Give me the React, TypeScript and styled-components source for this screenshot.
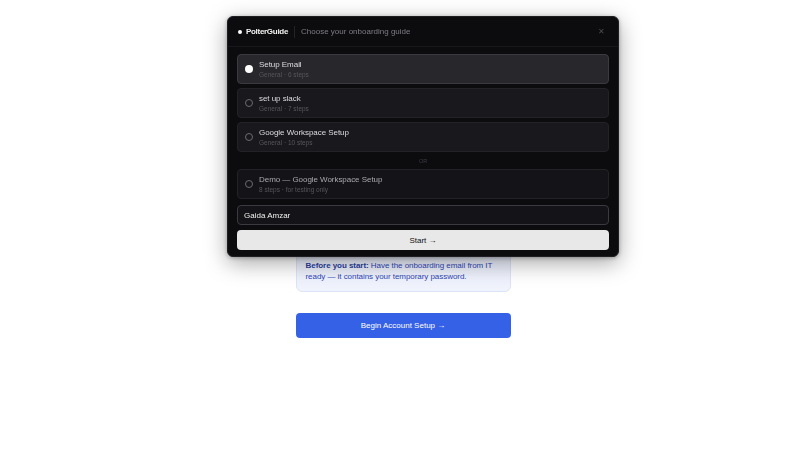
import React, { useState } from "react";
import styled, { createGlobalStyle } from "styled-components";

const GlobalStyle = createGlobalStyle`
  html, body {
    margin: 0;
    padding: 0;
    background: #ffffff;
    font-family: "Liberation Sans", Arial, sans-serif;
  }
`;

const Page = styled.div`
  width: 806px;
  height: 454px;
  display: flex;
  flex-direction: column;
  align-items: center;
  padding-top: 242px;
  box-sizing: border-box;
`;

const Column = styled.div`
  width: 215px;
  display: flex;
  flex-direction: column;
  gap: 21px;
`;

const InfoBox = styled.div`
  background: linear-gradient(180deg, #e8edfb 0%, #f1f4fd 100%);
  border: 1px solid #dde4f7;
  border-radius: 6px;
  padding: 17px 9px 9px;
  font-size: 8px;
  line-height: 11px;
  color: #2f47b8;
  letter-spacing: -0.05px;

  b {
    color: #2a3f9f;
  }
`;

const BeginButton = styled.button`
  height: 25px;
  border: none;
  border-radius: 4px;
  background: #3461e6;
  color: #ffffff;
  font-family: inherit;
  font-size: 8px;
  font-weight: 400;
`;

const Modal = styled.div`
  position: fixed;
  top: 16px;
  left: 227px;
  width: 392px;
  background: #0c0c0f;
  border: 1px solid #1e1e23;
  border-radius: 6px;
  box-sizing: border-box;
  box-shadow: 0 6px 22px rgba(0, 0, 0, 0.35), 0 1px 4px rgba(0, 0, 0, 0.3);
  overflow: hidden;
`;

const Header = styled.div`
  height: 29px;
  display: flex;
  align-items: center;
  padding: 0 10px;
  border-bottom: 1px solid #18181c;
`;

const Dot = styled.span`
  width: 4px;
  height: 4px;
  border-radius: 50%;
  background: #ffffff;
  margin-right: 4px;
`;

const Brand = styled.span`
  font-size: 8px;
  font-weight: 700;
  color: #f2f2f2;
  letter-spacing: -0.3px;
`;

const Divider = styled.span`
  width: 1px;
  height: 12px;
  background: #222228;
  margin: 0 6px;
`;

const Subtitle = styled.span`
  font-size: 8px;
  color: #7d7d84;
  flex: 1;
`;

const Close = styled.span`
  font-size: 8px;
  color: #4a4a50;
  margin-right: 3px;
`;

const Body = styled.div`
  padding: 7px 9px 6px;
  display: flex;
  flex-direction: column;
  gap: 4px;
`;

const Option = styled.div<{ $selected?: boolean; $muted?: boolean }>`
  height: 30px;
  box-sizing: border-box;
  display: flex;
  align-items: center;
  gap: 6px;
  padding: 0 7px;
  border-radius: 4px;
  background: ${(p) => (p.$selected ? "#28282c" : p.$muted ? "#141418" : "#19191d")};
  border: 1px solid ${(p) => (p.$selected ? "#3a3a40" : "#222227")};
`;

const Radio = styled.span<{ $selected?: boolean }>`
  width: 8px;
  height: 8px;
  border-radius: 50%;
  box-sizing: border-box;
  flex-shrink: 0;
  background: ${(p) => (p.$selected ? "#ffffff" : "transparent")};
  border: ${(p) => (p.$selected ? "none" : "1px solid #6a6a70")};
`;

const OptionText = styled.div`
  display: flex;
  flex-direction: column;
  gap: 1px;
`;

const OptionTitle = styled.span<{ $muted?: boolean }>`
  font-size: 8px;
  line-height: 10px;
  letter-spacing: -0.05px;
  color: ${(p) => (p.$muted ? "#a8a8ae" : "#dcdce0")};
`;

const OptionMeta = styled.span`
  font-size: 6.5px;
  line-height: 8px;
  color: #55555b;
`;

const OrRow = styled.div`
  height: 9px;
  display: flex;
  align-items: center;
  justify-content: center;
  font-size: 5.5px;
  color: #3c3c42;
`;

const NameInput = styled.input`
  margin-top: 2px;
  height: 20px;
  box-sizing: border-box;
  border: 1px solid #3a3a40;
  border-radius: 4px;
  background: #141418;
  color: #f0f0f0;
  font-family: inherit;
  font-size: 8px;
  padding: 0 6px;
  outline: none;
`;

const StartButton = styled.button`
  margin-top: 1px;
  height: 20px;
  border: none;
  border-radius: 4px;
  background: #e8e8e8;
  color: #111113;
  font-family: inherit;
  font-size: 8px;
  font-weight: 400;
`;

const guides = [
  { title: "Setup Email", meta: "General · 6 steps" },
  { title: "set up slack", meta: "General · 7 steps" },
  { title: "Google Workspace Setup", meta: "General · 10 steps" },
];

export default function App() {
  const [selected, setSelected] = useState(0);
  const [name, setName] = useState("Gaida Amzar");

  return (
    <>
      <GlobalStyle />
      <Page>
        <Column>
          <InfoBox>
            <b>Before you start:</b> Have the onboarding email from IT ready — it
            contains your temporary password.
          </InfoBox>
          <BeginButton>Begin Account Setup →</BeginButton>
        </Column>
      </Page>

      <Modal>
        <Header>
          <Dot />
          <Brand>PolterGuide</Brand>
          <Divider />
          <Subtitle>Choose your onboarding guide</Subtitle>
          <Close>✕</Close>
        </Header>
        <Body>
          {guides.map((g, i) => (
            <Option key={g.title} $selected={selected === i} onClick={() => setSelected(i)}>
              <Radio $selected={selected === i} />
              <OptionText>
                <OptionTitle>{g.title}</OptionTitle>
                <OptionMeta>{g.meta}</OptionMeta>
              </OptionText>
            </Option>
          ))}
          <OrRow>OR</OrRow>
          <Option $muted $selected={selected === 3} onClick={() => setSelected(3)}>
            <Radio $selected={selected === 3} />
            <OptionText>
              <OptionTitle $muted>Demo — Google Workspace Setup</OptionTitle>
              <OptionMeta>8 steps · for testing only</OptionMeta>
            </OptionText>
          </Option>
          <NameInput value={name} onChange={(e) => setName(e.target.value)} />
          <StartButton>Start →</StartButton>
        </Body>
      </Modal>
    </>
  );
}
